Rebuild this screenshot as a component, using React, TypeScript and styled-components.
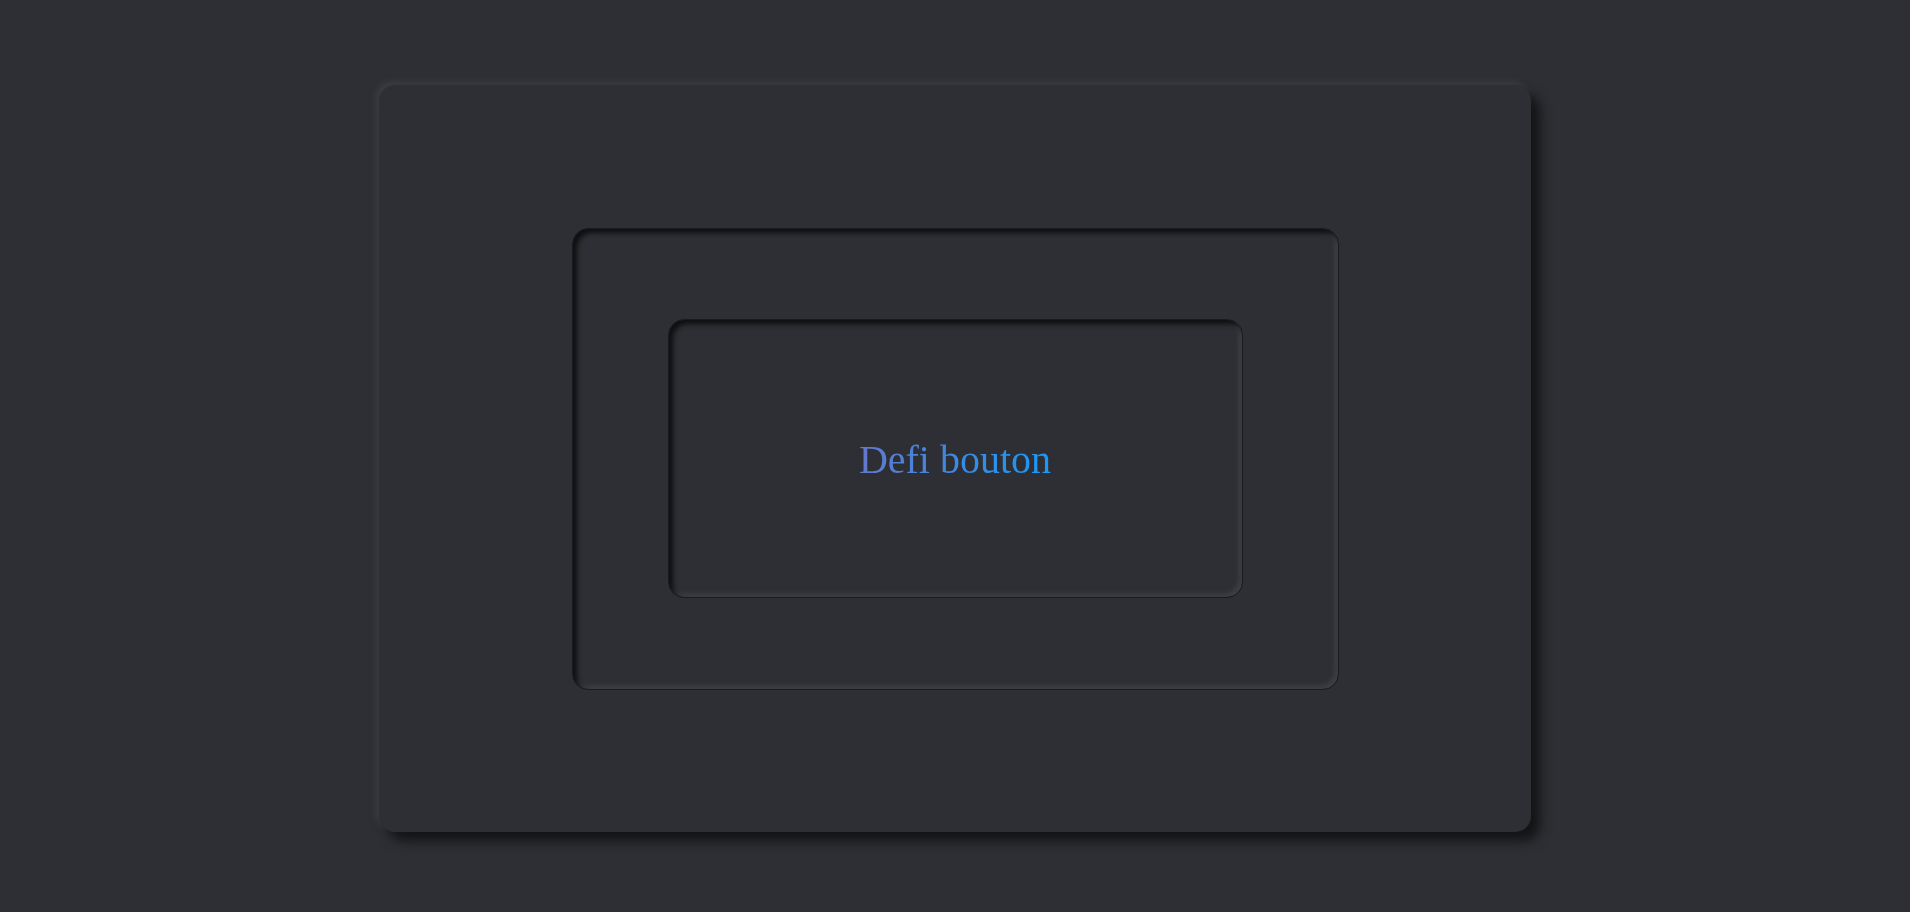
import React from "react";
import styled, { createGlobalStyle } from "styled-components";

const Global = createGlobalStyle`
  html, body {
    margin: 0;
    padding: 0;
    background: #2e2f34;
  }
  #root {
    min-height: 100vh;
  }
`;

const Page = styled.main`
  box-sizing: border-box;
  min-height: 912px;
  padding: 85px 0 80px;
  display: flex;
  justify-content: center;
  align-items: flex-start;
  background: #2e2f34;
`;

const Card = styled.section`
  box-sizing: border-box;
  width: 1152px;
  height: 747px;
  border-radius: 16px;
  background: #2e2f34;
  box-shadow: 9px 9px 12px #131416, -3px -3px 6px #3d3e44;
  display: flex;
  align-items: center;
  justify-content: center;
`;

const Well = styled.div<{ $w: number; $h: number }>`
  box-sizing: border-box;
  width: ${(p) => p.$w}px;
  height: ${(p) => p.$h}px;
  border-radius: 16px;
  background: #2e2f34;
  border: 1px solid #1a1b1e;
  box-shadow: inset 4px 4px 5px #0e0f11, inset -3px -3px 5px #3f4046;
  display: flex;
  align-items: center;
  justify-content: center;
`;

const Title = styled.span`
  font-family: "Liberation Serif", "Times New Roman", serif;
  font-size: 40px;
  line-height: 1;
  font-variant-ligatures: common-ligatures;
  background: linear-gradient(90deg, #6478cc 0%, #3a8ae0 50%, #1b98f5 100%);
  -webkit-background-clip: text;
  background-clip: text;
  color: transparent;
  margin-top: 2px;
`;

export default function App() {
  return (
    <>
      <Global />
      <Page>
        <Card>
          <Well $w={767} $h={462}>
            <Well $w={575} $h={279}>
              <Title>Defi bouton</Title>
            </Well>
          </Well>
        </Card>
      </Page>
    </>
  );
}
